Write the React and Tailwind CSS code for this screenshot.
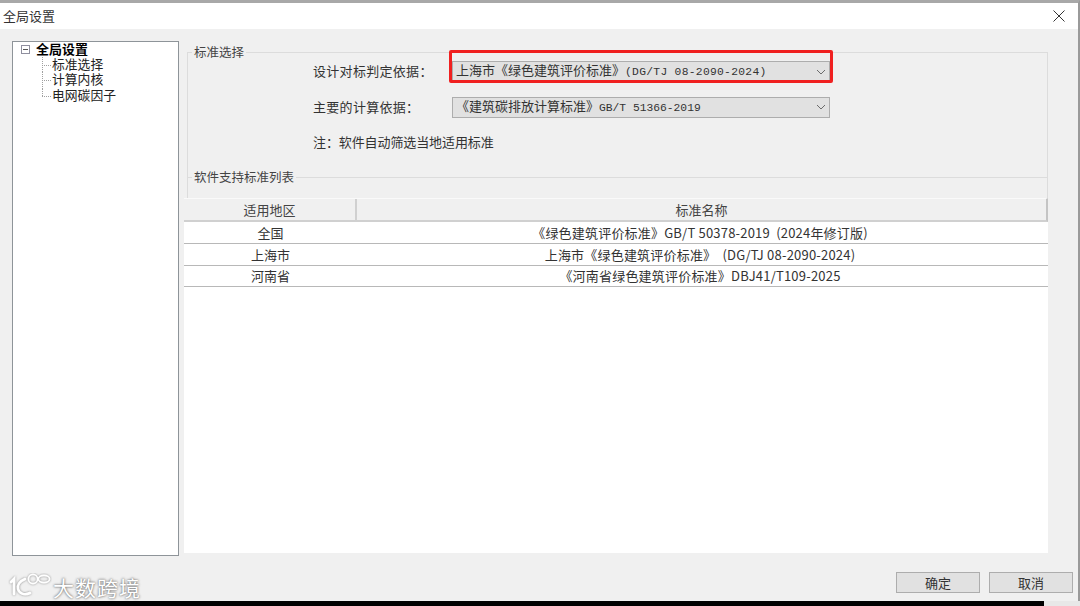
import React from 'react'

const cjk = "font-['Microsoft_YaHei','Noto_Sans_CJK_SC',sans-serif]"
const treeFont = "font-['Liberation_Sans','Noto_Sans_CJK_SC',sans-serif]"
const mono = "font-['Liberation_Mono',monospace] text-[11.3px] text-[#333]"

const Chevron = () => (
  <svg width="10" height="6" viewBox="0 0 10 6" className="shrink-0">
    <path d="M1 1l4 4 4-4" fill="none" stroke="#6b6b6b" strokeWidth="1" />
  </svg>
)

const Combo = ({ children }) => (
  <div className="w-[378px] h-[21px] border border-[#adadad] bg-[#e1e1e1] flex items-center justify-between pl-[3px] pr-[3px] text-[13px] text-[#333]">
    <div className="flex items-baseline whitespace-pre pb-[2px]">{children}</div>
    <Chevron />
  </div>
)

const FieldRow = ({ label, children, className }) => (
  <div className={`flex items-center ${className}`}>
    <div className="w-[139px] pb-[2px] text-[13px] tracking-[0.3px] text-[#333] whitespace-pre">{label}</div>
    {children}
  </div>
)

const Group = ({ title, className, children }) => (
  <div className={`relative border border-[#dcdcdc] ${className}`}>
    <span className="absolute left-[4px] top-[-9px] bg-[#f0f0f0] px-[2px] text-[12.5px] leading-[16px] text-[#444]">{title}</span>
    {children}
  </div>
)

const rows = [
  ['全国', '《绿色建筑评价标准》GB/T 50378-2019  (2024年修订版)', 'h-[22px]'],
  ['上海市', '上海市《绿色建筑评价标准》  (DG/TJ 08-2090-2024)', 'h-[22px]'],
  ['河南省', '《河南省绿色建筑评价标准》DBJ41/T109-2025', 'h-[21px]'],
]

const TreeItem = ({ children, last }) => (
  <div className="relative h-[15.4px] pl-[39px] text-[12.8px] leading-[15px] text-[#222]">
    <span className={`absolute left-[29px] top-0 w-0 border-l border-dotted border-[#a0a0a0] ${last ? 'h-[8px]' : 'h-[15px]'}`} />
    <span className="absolute left-[29px] top-[8px] w-[9px] border-t border-dotted border-[#a0a0a0]" />
    {children}
  </div>
)

const Logo = () => (
  <svg width="44" height="28" viewBox="0 0 44 28" className="shrink-0">
    <defs>
      <filter id="glow" x="-20%" y="-20%" width="140%" height="140%">
        <feDropShadow dx="0" dy="0" stdDeviation="1" floodColor="#808080" />
      </filter>
    </defs>
    <g filter="url(#glow)" fill="none" stroke="#ffffff" strokeLinecap="round">
      <path d="M3 9l3-3v15" strokeWidth="2.6" />
      <path d="M17 6c-5 2-8 6-7 10s6 7 12 4" strokeWidth="2.6" />
      <circle cx="25" cy="6" r="4.6" strokeWidth="1.6" />
      <ellipse cx="36" cy="6" rx="5.6" ry="3.6" strokeWidth="1.6" />
    </g>
  </svg>
)

export default function App() {
  return (
    <div className={`relative w-[1080px] h-[606px] overflow-hidden bg-[#e8e8e8] flex flex-col ${cjk}`}>
      <div className="h-[601px] flex flex-col bg-[#f0f0f0] border-t-[3px] border-t-[#a8a8a8] border-r-[2px] border-r-[#9a9a9a]">
        <div className="h-[26px] shrink-0 bg-white flex items-center justify-between pl-[3px] pr-[13px]">
          <span className="text-[13px] text-[#333]">全局设置</span>
          <svg width="12" height="12" viewBox="0 0 12 12">
            <path d="M0.5 0.5l11 11M11.5 0.5l-11 11" stroke="#333" strokeWidth="1" fill="none" />
          </svg>
        </div>

        <div className="flex-1 flex flex-col">
          <div className="flex pl-[12px] pt-[12px]">
            <div className={`w-[167px] h-[515px] border border-[#8e9499] bg-white ${treeFont}`}>
              <div className="relative h-[15px] pl-[23px] text-[13px] leading-[15px] font-bold text-black">
                <span className="absolute left-[8px] top-[3px] w-[9px] h-[9px] border border-[#8f8f9f] flex items-center justify-center">
                  <span className="w-[5px] h-px bg-[#555]" />
                </span>
                全局设置
              </div>
              <TreeItem>标准选择</TreeItem>
              <TreeItem>计算内核</TreeItem>
              <TreeItem last>电网碳因子</TreeItem>
            </div>

            <div className="ml-[5px] w-[864px] flex flex-col">
              <Group title="标准选择" className="ml-[3px] mt-[11px] w-[861px] h-[125px] border-b-0 pl-[125px] pt-[8px]">
                <FieldRow label="设计对标判定依据：">
                  <Combo>
                    上海市《绿色建筑评价标准》<span className={`${mono} tracking-[0.3px]`}>(DG/TJ 08-2090-2024)</span>
                  </Combo>
                </FieldRow>
                <FieldRow label="主要的计算依据：" className="mt-[14px]">
                  <Combo>
                    《建筑碳排放计算标准》<span className={mono}>GB/T 51366-2019</span>
                  </Combo>
                </FieldRow>
                <div className="mt-[15px] text-[13px] tracking-[-0.1px] leading-[18px] text-[#333]">注：软件自动筛选当地适用标准</div>
              </Group>

              <Group title="软件支持标准列表" className="ml-[3px] w-[861px] h-[21px] border-b-0" />

              <div className="h-[355px] bg-white flex flex-col text-[13px] text-[#333]">
                <div className="h-[24px] shrink-0 flex bg-[#f0f0f0] border-t border-t-[#fafafa] border-b-2 border-b-[#d0d0d0] border-r-2 border-r-[#c4c4c4]">
                  <div className="w-[173px] border-r-2 border-r-[#d0d0d0] flex items-center justify-center text-[#444]">适用地区</div>
                  <div className="flex-1 flex items-center justify-center text-[#444]">标准名称</div>
                </div>
                {rows.map(([area, name, height]) => (
                  <div key={area} className={`${height} shrink-0 flex items-center border-b border-b-[#b8b8b8]`}>
                    <div className="w-[173px] text-center">{area}</div>
                    <div className="flex-1 pr-[5px] text-center whitespace-pre tracking-[0.2px]">{name}</div>
                  </div>
                ))}
              </div>
            </div>
          </div>

          <div className="flex-1 flex items-start justify-between pl-[8px] pr-[5px]">
            <div className="mt-[17px] h-[28px] flex items-center gap-[1px] text-[21px] leading-[24px] tracking-[1px] text-white [text-shadow:0_0_2px_#707070,0_0_3px_#909090]">
              <Logo />
              大数跨境
            </div>
            <div className="flex gap-[9px] mt-[16px]">
              <div className="w-[84px] h-[21px] border border-[#adadad] bg-[#e1e1e1] flex items-center justify-center text-[13px] text-[#333]">确定</div>
              <div className="w-[84px] h-[21px] border border-[#adadad] bg-[#e1e1e1] flex items-center justify-center text-[13px] text-[#333]">取消</div>
            </div>
          </div>
        </div>
      </div>
      <div className="h-[5px] w-[1044px] bg-black" />
      <div className="absolute left-[449px] top-[50px] w-[384px] h-[33px] rounded-[2px] border-[3px] border-[#f02020]" />
    </div>
  )
}
